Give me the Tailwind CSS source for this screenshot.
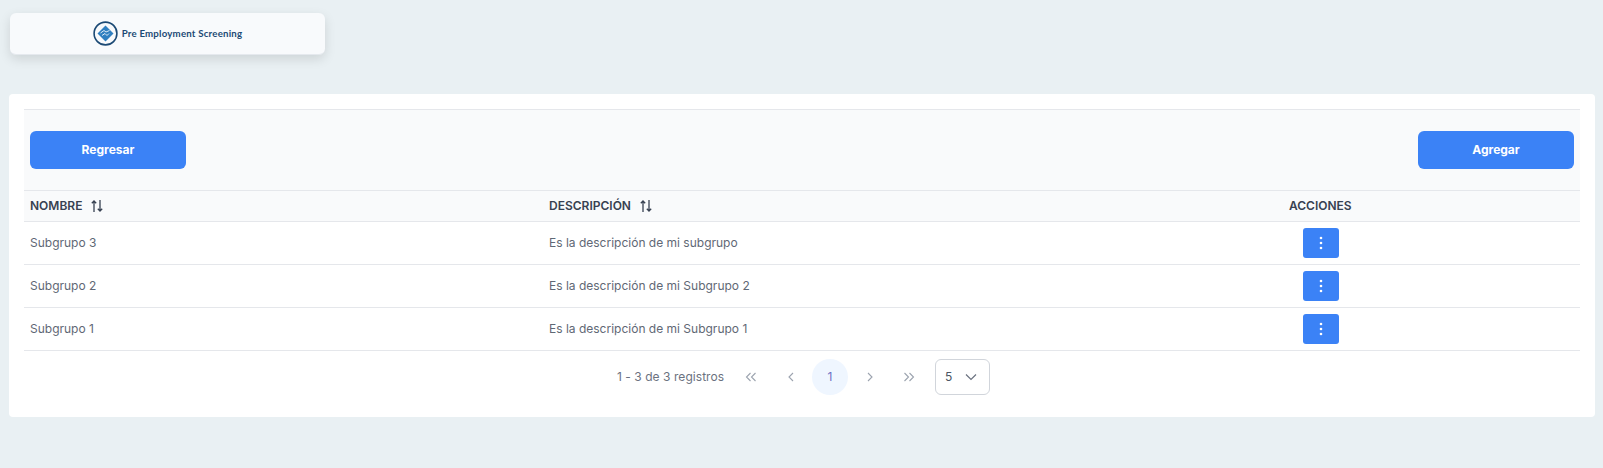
<!DOCTYPE html>
<html lang="es">
<head>
<meta charset="utf-8">
<title>Subgrupos</title>
<script src="https://cdn.jsdelivr.net/npm/@tailwindcss/browser@4"></script>
</head>
<body class="m-0 h-[468px] w-[1603px] overflow-hidden bg-[#e9f0f3] font-['Inter',sans-serif]">
  <div class="pl-[10px] pt-[13px]">
    <div class="flex h-[42px] w-[315px] items-center justify-center gap-[4px] rounded-[6px] border-b border-[#e5e9ee] bg-[#f8fafc] shadow-[0_4px_12px_rgba(0,0,0,0.12)]">
      <svg class="h-[25px] w-[25px]" viewBox="0 0 25 25" fill="none">
        <circle cx="12.5" cy="12.5" r="11.4" stroke="#1c4a75" stroke-width="1.6"/>
        <path d="M12.5 4.5l8 8-8 8-8-8z" fill="#2f7fc0"/>
        <path d="M7.5 12l3.5-2.5 2 1.5 3.5-1.5M9 14.5l3-2 2 2 2-2" stroke="#dceaf5" stroke-width="1" fill="none"/>
      </svg>
      <span class="font-['Lato',sans-serif] text-[9.7px] font-bold tracking-[0.2px] text-[#1c4a75]">Pre Employment Screening</span>
    </div>
  </div>
  <main class="ml-[9px] mt-[39px] h-[323px] w-[1586px] rounded-[4px] bg-white px-[15px] pt-[15px]">
    <div class="flex h-[82px] items-center justify-between border-y border-[#e5e7eb] bg-[#f9fafb] px-[6px]">
      <button class="h-[38px] w-[156px] rounded-[6px] bg-[#3b82f6] text-[12px] font-bold text-white">Regresar</button>
      <button class="h-[38px] w-[156px] rounded-[6px] bg-[#3b82f6] text-[12px] font-bold text-white">Agregar</button>
    </div>
    <table class="w-[1556px] table-fixed border-collapse text-left">
      <colgroup><col class="w-[519px]"><col class="w-[740px]"><col class="w-[297px]"></colgroup>
      <thead>
        <tr class="h-[30px] border-b border-[#e5e7eb] bg-[#f9fafb] text-[12px] font-semibold text-[#374151]">
          <th class="px-[6px] font-semibold">
            <span class="flex items-center gap-[8px]">NOMBRE
              <svg class="h-[14px] w-[14px] text-[#374151]" viewBox="0 0 14 14" fill="none" stroke="currentColor" stroke-width="1.3"><path d="M4 13V2M1.8 4.2L4 2l2.2 2.2M10 1v11M7.8 9.8L10 12l2.2-2.2"/></svg>
            </span>
          </th>
          <th class="px-[6px] font-semibold">
            <span class="flex items-center gap-[8px]">DESCRIPCIÓN
              <svg class="h-[14px] w-[14px] text-[#374151]" viewBox="0 0 14 14" fill="none" stroke="currentColor" stroke-width="1.3"><path d="M4 13V2M1.8 4.2L4 2l2.2 2.2M10 1v11M7.8 9.8L10 12l2.2-2.2"/></svg>
            </span>
          </th>
          <th class="px-[6px] font-semibold">ACCIONES</th>
        </tr>
      </thead>
      <tbody class="text-[12px] text-[#5f6875]">
        <tr class="h-[43px] border-b border-[#e5e7eb]">
          <td class="px-[6px]">Subgrupo 3</td>
          <td class="px-[6px]">Es la descripción de mi subgrupo</td>
          <td class="pl-[20px]"><button class="flex h-[30px] w-[36px] items-center justify-center rounded-[3px] bg-[#3b82f6]"><svg class="h-[14px] w-[4px]" viewBox="0 0 4 14" fill="white"><circle cx="2" cy="2" r="1.3"/><circle cx="2" cy="7" r="1.3"/><circle cx="2" cy="12" r="1.3"/></svg></button></td>
        </tr>
        <tr class="h-[43px] border-b border-[#e5e7eb]">
          <td class="px-[6px]">Subgrupo 2</td>
          <td class="px-[6px]">Es la descripción de mi Subgrupo 2</td>
          <td class="pl-[20px]"><button class="flex h-[30px] w-[36px] items-center justify-center rounded-[3px] bg-[#3b82f6]"><svg class="h-[14px] w-[4px]" viewBox="0 0 4 14" fill="white"><circle cx="2" cy="2" r="1.3"/><circle cx="2" cy="7" r="1.3"/><circle cx="2" cy="12" r="1.3"/></svg></button></td>
        </tr>
        <tr class="h-[43px] border-b border-[#e5e7eb]">
          <td class="px-[6px]">Subgrupo 1</td>
          <td class="px-[6px]">Es la descripción de mi Subgrupo 1</td>
          <td class="pl-[20px]"><button class="flex h-[30px] w-[36px] items-center justify-center rounded-[3px] bg-[#3b82f6]"><svg class="h-[14px] w-[4px]" viewBox="0 0 4 14" fill="white"><circle cx="2" cy="2" r="1.3"/><circle cx="2" cy="7" r="1.3"/><circle cx="2" cy="12" r="1.3"/></svg></button></td>
        </tr>
      </tbody>
    </table>
    <nav class="mt-[8px] flex h-[36px] items-center pl-[593px] text-[12px] text-[#6b7280]">
      <span class="w-[116px] tracking-[0.004em]">1 - 3 de 3 registros</span>
      <div class="flex items-center gap-[3.5px] text-[#9ca3af]">
        <button class="flex h-[36px] w-[36px] items-center justify-center"><svg class="h-[12px] w-[12px]" viewBox="0 0 12 12" fill="none" stroke="currentColor" stroke-width="1.1"><path d="M5.5 2L1.5 6l4 4M10.5 2l-4 4 4 4"/></svg></button>
        <button class="flex h-[36px] w-[36px] items-center justify-center"><svg class="h-[12px] w-[12px]" viewBox="0 0 12 12" fill="none" stroke="currentColor" stroke-width="1.1"><path d="M8 2L4 6l4 4"/></svg></button>
        <button class="flex h-[36px] w-[36px] items-center justify-center rounded-full bg-[#eff6ff] text-[12px] text-[#6d6fc4]">1</button>
        <button class="flex h-[36px] w-[36px] items-center justify-center"><svg class="h-[12px] w-[12px]" viewBox="0 0 12 12" fill="none" stroke="currentColor" stroke-width="1.1"><path d="M4 2l4 4-4 4"/></svg></button>
        <button class="flex h-[36px] w-[36px] items-center justify-center"><svg class="h-[12px] w-[12px]" viewBox="0 0 12 12" fill="none" stroke="currentColor" stroke-width="1.1"><path d="M1.5 2l4 4-4 4M6.5 2l4 4-4 4"/></svg></button>
      </div>
      <div class="ml-[8px] flex h-[36px] w-[55px] items-center justify-between rounded-[6px] border border-[#d1d5db] pl-[9px] pr-[12px] text-[#4b5563]">
        <span>5</span>
        <svg class="h-[12px] w-[12px]" viewBox="0 0 12 12" fill="none" stroke="#6b7280" stroke-width="1.2"><path d="M1 3.5L6 8.5l5-5"/></svg>
      </div>
    </nav>
  </main>
</body>
</html>
